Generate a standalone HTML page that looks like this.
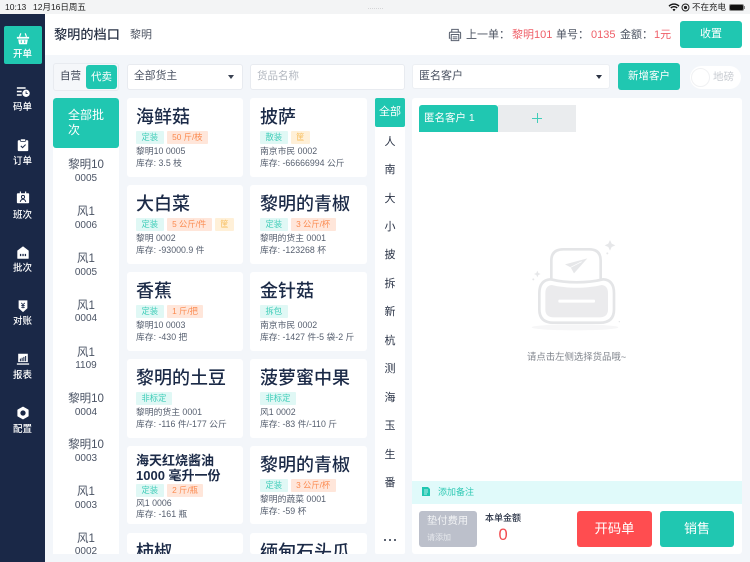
<!DOCTYPE html>
<html lang="zh"><head><meta charset="utf-8">
<style>
*{box-sizing:border-box;margin:0;padding:0}
html,body{width:750px;height:562px;overflow:hidden;background:#f3f6fa}
body{position:relative;font-family:"Liberation Sans","Noto Sans CJK SC",sans-serif;color:#1b2a47}
.a{position:absolute;white-space:nowrap}
.box{position:absolute;background:#fff;border-radius:3px}
.nav{position:absolute;left:0;width:45px;text-align:center;color:#fff;font-size:9.5px;line-height:12px;font-weight:500}
.nav svg{position:absolute;left:16px;top:1px;width:14px;height:14px}
.b1{position:absolute;left:0;width:66px;text-align:center;color:#4a5364;font-size:11.5px;line-height:14px}
.b2{position:absolute;left:0;width:66px;text-align:center;color:#4a5364;font-size:10px;line-height:12px}
.card{position:absolute;width:116px;height:79px;background:#fff;border-radius:3px;overflow:hidden}
.card .t{position:absolute;left:9px;top:7px;font-size:18px;line-height:24px;font-weight:500;white-space:nowrap;color:#1b2a47}
.card .l{position:absolute;left:9px;top:33px;height:13px;white-space:nowrap;display:flex;gap:3px}
.tag{display:inline-block;height:13px;line-height:13px;padding:0 5.5px;font-size:8.3px;border-radius:1px}
.g{background:#e0f8f5;color:#3fcdb8}.o{background:#ffe6da;color:#fb8a4f}.y{background:#fff0d8;color:#f7bf60}
.card .s{position:absolute;left:9px;font-size:8.8px;line-height:11px;color:#565f6f;white-space:nowrap}
.c2{width:117px}
.c2 .t,.c2 .l,.c2 .s{left:10px}
.ix{position:absolute;left:375px;width:30px;text-align:center;font-size:11px;line-height:14px;color:#2a3346}
</style></head><body>

<!-- status bar -->
<div class="a" style="left:0;top:0;width:750px;height:14px;background:#f3f4f5"></div>
<div class="a" style="left:5px;top:1px;font-size:8.500px;line-height:12px;color:#222">10:13</div>
<div class="a" style="left:33px;top:1px;font-size:8.500px;line-height:12px;color:#222">12月16日周五</div>
<div class="a" style="left:368px;top:8px;width:15px;height:2px;border-top:1px dotted #d4d5d7"></div>
<svg class="a" style="left:668px;top:3px" width="12" height="9" viewBox="0 0 12 9"><path d="M1 3.200a7 7 0 0 1 10 0M2.800 5a4.500 4.500 0 0 1 6.400 0" fill="none" stroke="#111" stroke-width="1.400"/><path d="M4.500 6.600a2.200 2.200 0 0 1 3 0L6 8.200z" fill="#111"/></svg>
<svg class="a" style="left:681px;top:3px" width="9" height="9" viewBox="0 0 9 9"><circle cx="4.500" cy="4.500" r="3.500" fill="none" stroke="#222"/><circle cx="4.500" cy="4.500" r="1.600" fill="#222"/></svg>
<div class="a" style="left:692px;top:1px;font-size:8.500px;line-height:12px;color:#222">不在充电</div>
<div class="a" style="left:729px;top:4px;width:15px;height:7px;background:#111;border-radius:2px;border:1px solid #888"></div>
<div class="a" style="left:744px;top:6px;width:1px;height:3px;background:#888"></div>

<!-- sidebar -->
<div class="a" style="left:0;top:14px;width:45px;height:548px;background:#1a2847"></div>
<div class="a" style="left:4px;top:26px;width:38px;height:38px;background:#20c7b1;border-radius:2px"></div>

<div class="nav" style="top:31px;height:32px"><svg viewBox="0 0 16 16"><path d="M5.500 1.500 4 5.500M10.500 1.500 12 5.500" stroke="#fff" stroke-width="1.400" fill="none"/><path d="M1 5.500h14v2H1zM2.500 8.500h11l-1 5.500h-9z" fill="#fff"/><path d="M6 9.500v3M10 9.500v3" stroke="#20c7b1"/></svg><div style="position:absolute;top:18px;width:45px">开单</div></div>

<div class="nav" style="top:84px;height:32px"><svg viewBox="0 0 16 16"><path d="M1 2.500h10v1.800H1zM1 6.500h5.500v1.800H1zM1 10.500h5.500v1.800H1z" fill="#fff"/><circle cx="11.500" cy="9.500" r="4.200" fill="#fff"/><path d="M11.500 7.300v2.400h1.900" stroke="#1a2847" stroke-width="1" fill="none"/></svg><div style="position:absolute;top:18px;width:45px">码单</div></div>

<div class="nav" style="top:137px;height:32px"><svg viewBox="0 0 16 16"><path d="M3 2.500h10a1 1 0 0 1 1 1V14a1 1 0 0 1-1 1H3a1 1 0 0 1-1-1V3.500a1 1 0 0 1 1-1z" fill="#fff"/><rect x="5" y="1" width="6" height="3" rx="1" fill="#fff" stroke="#1a2847" stroke-width=".8"/><path d="M5.500 9l2 2 3.500-3.500" stroke="#1a2847" stroke-width="1.200" fill="none"/></svg><div style="position:absolute;top:19px;width:45px">订单</div></div>

<div class="nav" style="top:190px;height:32px"><svg viewBox="0 0 16 16"><path d="M2 2.500h12a1 1 0 0 1 1 1V13a1 1 0 0 1-1 1H2a1 1 0 0 1-1-1V3.500a1 1 0 0 1 1-1z" fill="#fff"/><path d="M5 .5v4M11 .5v4" stroke="#fff" stroke-width="1.300"/><circle cx="8" cy="6.800" r="1.800" fill="none" stroke="#1a2847" stroke-width="1.100"/><path d="M4.800 12.500c.5-2 1.500-3 3.200-3s2.700 1 3.200 3" stroke="#1a2847" stroke-width="1.100" fill="none"/></svg><div style="position:absolute;top:20px;width:45px">班次</div></div>

<div class="nav" style="top:245px;height:32px"><svg viewBox="0 0 16 16"><path d="M8 1l6 4.500v8.500H2V5.500z" fill="#fff" stroke="#fff" stroke-linejoin="round"/><path d="M4.500 9h1.500v2.500H4.500zM7.300 9h1.500v2.500H7.300zM10 9h1.500v2.500H10z" fill="#1a2847"/></svg><div style="position:absolute;top:18px;width:45px">批次</div></div>

<div class="nav" style="top:298px;height:32px"><svg viewBox="0 0 16 16"><path d="M3 1.500h10v9l-5 4.500-5-4.500z" fill="#fff"/><path d="M6 4.500l2 2 2-2M8 6.500v4M6 7.500h4M6 9.500h4" stroke="#1a2847" fill="none"/></svg><div style="position:absolute;top:18px;width:45px">对账</div></div>

<div class="nav" style="top:351px;height:32px"><svg viewBox="0 0 16 16"><path d="M2.500 2h11v9.500h-11z" fill="#fff"/><path d="M1 13h14v1.500H1z" fill="#fff"/><path d="M5 7.500v3M7 6.500v4M9 5.500v5M11 4.500v6" stroke="#1a2847" stroke-width="1.200"/></svg><div style="position:absolute;top:19px;width:45px">报表</div></div>

<div class="nav" style="top:405px;height:32px"><svg viewBox="0 0 16 16"><path d="M8 1.500l5.600 3.200v6.600L8 14.500l-5.600-3.200V4.700z" fill="#fff" stroke="#fff" stroke-linejoin="round" stroke-width="1.600"/><circle cx="8" cy="8" r="3" fill="#1a2847"/></svg><div style="position:absolute;top:19px;width:45px">配置</div></div>

<!-- header -->
<div class="a" style="left:45px;top:14px;width:705px;height:41px;background:#fff"></div>
<div class="a" style="left:54px;top:25px;font-size:13.200px;line-height:20px;font-weight:500;color:#2a3346">黎明的档口</div>
<div class="a" style="left:130px;top:27px;font-size:11px;line-height:16px;color:#4e5563">黎明</div>
<svg class="a" style="left:448px;top:28px" width="14" height="14" viewBox="0 0 15 15"><path d="M4 4V1.500h7V4M2.500 11H1.500V5.500q0-1 1-1h10q1 0 1 1V11h-1" fill="none" stroke="#5b6270" stroke-width="1.100"/><path d="M3.500 7h8v6.500h-8zM5 9.500h5M5 11.500h5" fill="none" stroke="#5b6270" stroke-width="1.100"/></svg>
<div class="a" style="left:466px;top:27px;font-size:11px;line-height:16px;color:#4e5563">上一单：</div>
<div class="a" style="left:512px;top:27px;font-size:11px;line-height:16px;color:#ef5f68">黎明101</div>
<div class="a" style="left:556px;top:27px;font-size:11px;line-height:16px;color:#4e5563">单号：</div>
<div class="a" style="left:591px;top:27px;font-size:11px;line-height:16px;color:#ef5f68">0135</div>
<div class="a" style="left:620px;top:27px;font-size:11px;line-height:16px;color:#4e5563">金额：</div>
<div class="a" style="left:654px;top:27px;font-size:11px;line-height:16px;color:#ef5f68">1元</div>
<div class="a" style="left:680px;top:21px;width:62px;height:27px;background:#20c7b1;border-radius:3px;color:#fff;font-size:11px;line-height:27px;text-align:center">收置</div>

<!-- filter row -->
<div class="a" style="left:53px;top:63px;width:66px;height:28px;background:#f5f7fa;border:1px solid #e8ebf0;border-radius:3px"></div>
<div class="a" style="left:60px;top:69px;font-size:10.500px;line-height:15px;color:#3c4454">自营</div>
<div class="a" style="left:86px;top:65px;width:31px;height:24px;background:#20c7b1;border-radius:3px;color:#fff;font-size:10.500px;line-height:24px;text-align:center">代卖</div>

<div class="box" style="left:127px;top:64px;width:116px;height:26px;border:1px solid #e8ebf0"></div>
<div class="a" style="left:134px;top:69px;font-size:10.800px;line-height:15px;color:#4a5262">全部货主</div>
<div class="a" style="left:228px;top:75px;border:3px solid transparent;border-top:4px solid #3a4252;border-bottom:0"></div>

<div class="box" style="left:250px;top:64px;width:155px;height:26px;border:1px solid #e8ebf0"></div>
<div class="a" style="left:257px;top:69px;font-size:10.500px;line-height:15px;color:#b3b8c0">货品名称</div>

<div class="box" style="left:412px;top:64px;width:198px;height:25px;border:1px solid #eceff3"></div>
<div class="a" style="left:419px;top:69px;font-size:11px;line-height:15px;color:#4a5262">匿名客户</div>
<div class="a" style="left:596px;top:75px;border:3px solid transparent;border-top:4px solid #2a3242;border-bottom:0"></div>

<div class="a" style="left:618px;top:63px;width:62px;height:27px;background:#20c7b1;border-radius:3px;color:#fff;font-size:10.500px;line-height:26px;text-align:center">新增客户</div>
<div class="a" style="left:690px;top:66px;width:51px;height:23px;background:#fff;border-radius:12px"></div>
<div class="a" style="left:691px;top:68px;width:19px;height:19px;background:#fff;border:1px solid #f0f1f3;border-radius:50%"></div>
<div class="a" style="left:713px;top:70px;font-size:10.500px;line-height:15px;color:#c8ccd2">地磅</div>

<!-- batch column -->
<div class="a" style="left:53px;top:98px;width:66px;height:456px;background:#fff;border-radius:3px 3px 0 0;overflow:hidden">
<div class="a" style="left:0;top:0;width:66px;height:50px;background:#20c7b1;border-radius:3px"></div>
<div style="position:absolute;left:15px;top:10px;width:40px;color:#fff;font-size:12px;line-height:15px;white-space:normal">全部批次</div>
<div class="b1" style="top:60px">黎明10</div><div class="b2" style="top:75px">0005</div>
<div class="b1" style="top:107px">风1</div><div class="b2" style="top:122px">0006</div>
<div class="b1" style="top:154px">风1</div><div class="b2" style="top:169px">0005</div>
<div class="b1" style="top:201px">风1</div><div class="b2" style="top:215px">0004</div>
<div class="b1" style="top:248px">风1</div><div class="b2" style="top:262px">1109</div>
<div class="b1" style="top:294px">黎明10</div><div class="b2" style="top:309px">0004</div>
<div class="b1" style="top:340px">黎明10</div><div class="b2" style="top:355px">0003</div>
<div class="b1" style="top:387px">风1</div><div class="b2" style="top:402px">0003</div>
<div class="b1" style="top:434px">风1</div><div class="b2" style="top:448px">0002</div>
</div>

<!-- cards -->
<div class="a" style="left:127px;top:98px;width:241px;height:456px;overflow:hidden">
<div class="card" style="left:0;top:0"><div class="t">海鲜菇</div><div class="l"><span class="tag g">定装</span><span class="tag o">50 斤/枝</span></div><div class="s" style="top:48px">黎明10 0005</div><div class="s" style="top:60px">库存: 3.5 枝</div></div>
<div class="card c2" style="left:123px;top:0"><div class="t">披萨</div><div class="l"><span class="tag g">散装</span><span class="tag y">筐</span></div><div class="s" style="top:48px">南京市民 0002</div><div class="s" style="top:60px">库存: -66666994 公斤</div></div>

<div class="card" style="left:0;top:87px"><div class="t">大白菜</div><div class="l"><span class="tag g">定装</span><span class="tag o">5 公斤/件</span><span class="tag y">筐</span></div><div class="s" style="top:48px">黎明 0002</div><div class="s" style="top:60px">库存: -93000.9 件</div></div>
<div class="card c2" style="left:123px;top:87px"><div class="t">黎明的青椒</div><div class="l"><span class="tag g">定装</span><span class="tag o">3 公斤/杯</span></div><div class="s" style="top:48px">黎明的货主 0001</div><div class="s" style="top:60px">库存: -123268 杯</div></div>

<div class="card" style="left:0;top:174px"><div class="t">香蕉</div><div class="l"><span class="tag g">定装</span><span class="tag o">1 斤/把</span></div><div class="s" style="top:48px">黎明10 0003</div><div class="s" style="top:60px">库存: -430 把</div></div>
<div class="card c2" style="left:123px;top:174px"><div class="t">金针菇</div><div class="l"><span class="tag g">拆包</span></div><div class="s" style="top:48px">南京市民 0002</div><div class="s" style="top:60px">库存: -1427 件-5 袋-2 斤</div></div>

<div class="card" style="left:0;top:261px"><div class="t">黎明的土豆</div><div class="l"><span class="tag g">非标定</span></div><div class="s" style="top:48px">黎明的货主 0001</div><div class="s" style="top:60px">库存: -116 件/-177 公斤</div></div>
<div class="card c2" style="left:123px;top:261px"><div class="t">菠萝蜜中果</div><div class="l"><span class="tag g">非标定</span></div><div class="s" style="top:48px">风1 0002</div><div class="s" style="top:60px">库存: -83 件/-110 斤</div></div>

<div class="card" style="left:0;top:348px;height:78px"><div class="t" style="top:7px;font-size:13px;line-height:15px;font-weight:700">海天红烧酱油<br>1000 毫升一份</div><div class="l" style="top:38px"><span class="tag g">定装</span><span class="tag o">2 斤/瓶</span></div><div class="s" style="top:52px">风1 0006</div><div class="s" style="top:63px">库存: -161 瓶</div></div>
<div class="card c2" style="left:123px;top:348px;height:78px"><div class="t">黎明的青椒</div><div class="l"><span class="tag g">定装</span><span class="tag o">3 公斤/杯</span></div><div class="s" style="top:48px">黎明的蔬菜 0001</div><div class="s" style="top:60px">库存: -59 杯</div></div>

<div class="card" style="left:0;top:435px;height:21px"><div class="t" style="top:9px;line-height:20px;height:20px">柿椒</div></div>
<div class="card c2" style="left:123px;top:435px;height:21px"><div class="t" style="top:9px;line-height:20px;height:20px">缅甸石头瓜</div></div>
</div>

<!-- index -->
<div class="a" style="left:375px;top:98px;width:30px;height:456px;background:#fff;border-radius:2px"></div>
<div class="a" style="left:375px;top:98px;width:30px;height:29px;background:#20c7b1;border-radius:2px;color:#fff;font-size:11px;line-height:29px;text-align:center">全部</div>
<div class="ix" style="top:135px">人</div><div class="ix" style="top:163px">南</div><div class="ix" style="top:192px">大</div><div class="ix" style="top:220px">小</div><div class="ix" style="top:248px">披</div><div class="ix" style="top:277px">拆</div><div class="ix" style="top:305px">新</div><div class="ix" style="top:334px">杭</div><div class="ix" style="top:362px">测</div><div class="ix" style="top:391px">海</div><div class="ix" style="top:419px">玉</div><div class="ix" style="top:448px">生</div><div class="ix" style="top:476px">番</div>
<div class="a" style="left:384px;top:539px;width:2px;height:2px;border-radius:50%;background:#2a3346"></div>
<div class="a" style="left:389px;top:539px;width:2px;height:2px;border-radius:50%;background:#2a3346"></div>
<div class="a" style="left:394px;top:539px;width:2px;height:2px;border-radius:50%;background:#2a3346"></div>

<!-- right panel -->
<div class="a" style="left:412px;top:98px;width:330px;height:456px;background:#fff;border-radius:3px"></div>
<div class="a" style="left:419px;top:105px;width:79px;height:27px;background:#20c7b1;border-radius:3px 3px 0 0;color:#fff;font-size:10.500px;line-height:27px;padding-left:5px">匿名客户 1</div>
<div class="a" style="left:498px;top:105px;width:78px;height:27px;background:#eaecee"></div>
<div class="a" style="left:532px;top:118px;width:10px;height:1px;background:#42cdb9"></div>
<div class="a" style="left:537px;top:113px;width:1px;height:10px;background:#42cdb9"></div>

<!-- empty state -->
<svg class="a" style="left:500px;top:230px" width="150" height="110" viewBox="0 0 450 330">
<ellipse cx="225" cy="292" rx="130" ry="9" fill="#f6f6f7"/>
<path d="M154 150V92Q154 58 190 58H268Q302 58 302 92V150" fill="#fff" stroke="#e4e5e7" stroke-width="8"/>
<path d="M152 148C200 160 260 160 310 148Q342 150 342 190V238Q342 278 300 278H160Q118 278 118 238V190Q118 150 152 148Z" fill="#fff" stroke="#e4e5e7" stroke-width="8"/>
<path d="M155 165C200 176 260 176 305 165Q324 167 324 190V238Q324 262 298 262H162Q136 262 136 238V190Q136 167 155 165Z" fill="#ebebed"/>
<rect x="175" y="209" width="110" height="9" rx="3" fill="#fff"/>
<path d="M195 103 262 85 222 130 212 112Z" fill="#e6e7e9"/>
<path d="M212 112 245 95" stroke="#fff" stroke-width="2" fill="none"/>
<path d="M330 30 335 41 346 46 335 51 330 62 325 51 314 46 325 41Z" fill="#e6e7e9"/>
<path d="M112 122 115 129 122 132 115 135 112 142 109 135 102 132 109 129Z" fill="#e6e7e9"/>
<circle cx="100" cy="148" r="3" fill="#e6e7e9"/><circle cx="322" cy="70" r="3" fill="#e6e7e9"/><circle cx="358" cy="275" r="2" fill="#e6e7e9"/>
</svg>
<div class="a" style="left:527px;top:350px;font-size:9.400px;line-height:13px;color:#80858d">请点击左侧选择货品哦~</div>

<!-- note bar -->
<div class="a" style="left:412px;top:481px;width:330px;height:23px;background:#e0fafa"></div>
<svg class="a" style="left:421px;top:486px" width="10" height="11" viewBox="0 0 10 11"><path d="M1 1h6l2 2v7H1z" fill="#20c7b1"/><path d="M3 4h4M3 6h4M3 8h3" stroke="#e0fafa" stroke-width=".8"/></svg>
<div class="a" style="left:438px;top:486px;font-size:9px;line-height:13px;color:#30c9b4">添加备注</div>

<!-- bottom -->
<div class="a" style="left:419px;top:511px;width:58px;height:36px;background:#bcc0cb;border-radius:3px"></div>
<div class="a" style="left:427px;top:514px;font-size:10.300px;line-height:15px;color:#f2f3f5">垫付费用</div>
<div class="a" style="left:427px;top:532px;font-size:8px;line-height:12px;color:#e6e8ec">请添加</div>
<div class="a" style="left:485px;top:512px;font-size:9px;line-height:13px;color:#2a3346;font-weight:500">本单金额</div>
<div class="a" style="left:498.500px;top:525px;font-size:16.500px;line-height:20px;color:#f24c50">0</div>
<div class="a" style="left:577px;top:511px;width:75px;height:36px;background:#ff4d50;border-radius:3px;color:#fff;font-size:13.300px;line-height:36px;text-align:center">开码单</div>
<div class="a" style="left:660px;top:511px;width:74px;height:36px;background:#20c7b1;border-radius:3px;color:#fff;font-size:13px;line-height:36px;text-align:center">销售</div>

</body></html>
